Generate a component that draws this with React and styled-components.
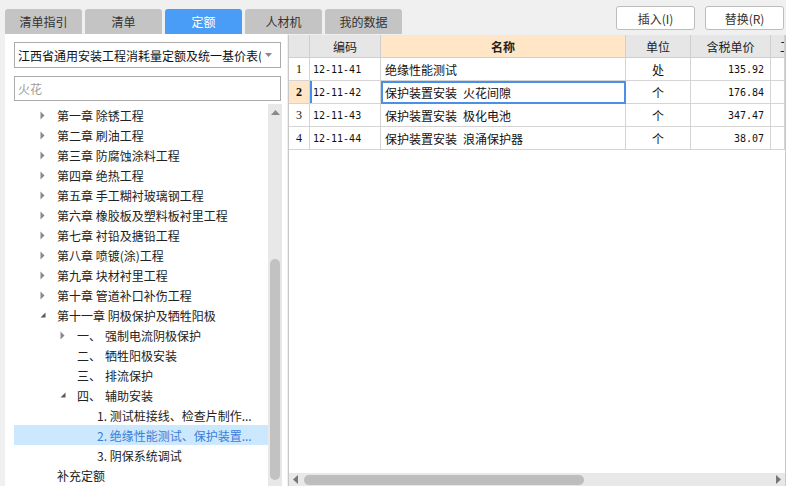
import React from 'react'
import styled, { createGlobalStyle } from 'styled-components'

const GlobalStyle = createGlobalStyle`
    body {
        margin: 0;
        background: #f0f0f0;
        font-family: "Noto Sans CJK SC", "Noto Sans", sans-serif;
        color: #222;
    }
`

const tabs = ['清单指引', '清单', '定额', '人材机', '我的数据']

const tree = [
    { level: 0, arrow: 'right', text: '第一章 除锈工程' },
    { level: 0, arrow: 'right', text: '第二章 刷油工程' },
    { level: 0, arrow: 'right', text: '第三章 防腐蚀涂料工程' },
    { level: 0, arrow: 'right', text: '第四章 绝热工程' },
    { level: 0, arrow: 'right', text: '第五章 手工糊衬玻璃钢工程' },
    { level: 0, arrow: 'right', text: '第六章 橡胶板及塑料板衬里工程' },
    { level: 0, arrow: 'right', text: '第七章 衬铅及搪铅工程' },
    { level: 0, arrow: 'right', text: '第八章 喷镀(涂)工程' },
    { level: 0, arrow: 'right', text: '第九章 块材衬里工程' },
    { level: 0, arrow: 'right', text: '第十章 管道补口补伤工程' },
    { level: 0, arrow: 'down', text: '第十一章 阴极保护及牺牲阳极' },
    { level: 1, arrow: 'right', num: '一、', text: '强制电流阴极保护' },
    { level: 1, num: '二、', text: '牺牲阳极安装' },
    { level: 1, num: '三、', text: '排流保护' },
    { level: 1, arrow: 'down', num: '四、', text: '辅助安装' },
    { level: 2, text: '1. 测试桩接线、检查片制作...' },
    { level: 2, text: '2. 绝缘性能测试、保护装置...', selected: true },
    { level: 2, text: '3. 阴保系统调试' },
    { level: 0, text: '补充定额' },
]

const rows = [
    { no: 1, code: '12-11-41', name: '绝缘性能测试', unit: '处', price: '135.92' },
    { no: 2, code: '12-11-42', name: '保护装置安装\u2002火花间隙', unit: '个', price: '176.84', selected: true },
    { no: 3, code: '12-11-43', name: '保护装置安装\u2002极化电池', unit: '个', price: '347.47' },
    { no: 4, code: '12-11-44', name: '保护装置安装\u2002浪涌保护器', unit: '个', price: '38.07' },
]

const Page = styled.div`
    width: 786px;
    height: 486px;
    display: flex;
    flex-direction: column;
    overflow: hidden;
`

const TopBar = styled.div`
    height: 34px;
    display: flex;
    justify-content: space-between;
    padding: 0 2px 0 5px;
    flex-shrink: 0;
`

const Tabs = styled.div`
    display: flex;
    gap: 3px;
    align-self: flex-end;
`

const Tab = styled.div`
    width: 77px;
    height: 25px;
    border-radius: 3px 3px 0 0;
    background: ${({ active }) => active ? '#4a9df6' : '#c4c4c4'};
    color: ${({ active }) => active ? '#fff' : '#333'};
    font-size: 12px;
    display: flex;
    align-items: center;
    justify-content: center;
`

const Buttons = styled.div`
    display: flex;
    gap: 10px;
    padding-top: 6px;
`

const Button = styled.div`
    width: 77px;
    height: 22px;
    border: 1px solid #bcbcbc;
    border-radius: 3px;
    background: #fff;
    font-size: 12px;
    color: #333;
    display: flex;
    align-items: center;
    justify-content: center;
`

const Main = styled.div`
    flex: 1;
    min-height: 0;
    display: flex;
    padding-left: 5px;
`

const LeftPanel = styled.div`
    width: 282px;
    background: #fff;
    display: flex;
    flex-direction: column;
    padding: 8px 5px 0 9px;
    box-sizing: border-box;
`

const Select = styled.div`
    height: 26px;
    width: 267px;
    box-sizing: border-box;
    border: 1px solid #ababab;
    display: flex;
    align-items: center;
    padding: 0 6px 0 3px;
    font-size: 12px;
    color: #111;
`

const SelectText = styled.span`
    flex: 1;
    overflow: hidden;
    white-space: nowrap;
    margin-right: 4px;
`

const Search = styled.div`
    margin-top: 8px;
    height: 25px;
    width: 267px;
    box-sizing: border-box;
    border: 1px solid #ababab;
    display: flex;
    align-items: center;
    padding-left: 3px;
    font-size: 12px;
    color: #a0a0a0;
`

const TreeArea = styled.div`
    margin-top: 3px;
    flex: 1;
    min-height: 0;
    display: flex;
`

const TreeList = styled.div`
    flex: 1;
    padding-top: 1px;
    overflow: hidden;
`

const TreeRow = styled.div`
    height: 20px;
    display: flex;
    align-items: center;
    padding-left: ${({ level }) => 26 + level * 20}px;
    background: ${({ selected }) => selected ? '#cce8ff' : 'transparent'};
    color: ${({ selected }) => selected ? '#3d7dd6' : '#222'};
    font-size: 12px;
    white-space: nowrap;
`

const ArrowSlot = styled.span`
    width: 17px;
    flex-shrink: 0;
    display: flex;
    align-items: center;
`

const Num = styled.span`
    width: 28px;
    flex-shrink: 0;
`

const VScroll = styled.div`
    width: 14px;
    background: #e8e8e8;
    display: flex;
    flex-direction: column;
    align-items: center;
`

const VThumb = styled.div`
    margin-top: 139px;
    width: 10px;
    flex: 1;
    margin-bottom: 6px;
    border-radius: 5px;
    background: #c2c2c2;
`

const ScrollArrow = styled.div`
    height: ${({ size }) => size || 16}px;
    width: ${({ w }) => w ? `${w}px` : 'auto'};
    display: flex;
    align-items: center;
    justify-content: center;
    flex-shrink: 0;
`

const GridPanel = styled.div`
    flex: 1;
    margin-left: 1px;
    margin-top: 1px;
    background: #fff;
    border-left: 1px solid #c8c8c8;
    border-right: 1px solid #c8c8c8;
    display: flex;
    flex-direction: column;
    min-width: 0;
`

const Table = styled.div`
    display: grid;
    grid-template-columns: 21px 71px 245px 65px 80px 1fr;
    grid-auto-rows: 23px;
    flex: 1;
    align-content: start;
    overflow: hidden;
`

const HeadCell = styled.div`
    background: ${({ accent }) => accent ? '#fee6c6' : '#e6e6e6'};
    border-right: 1px solid #cfcfcf;
    border-bottom: 1px solid #cfcfcf;
    font-size: 12px;
    font-weight: ${({ accent }) => accent ? 700 : 400};
    color: #222;
    display: flex;
    align-items: center;
    justify-content: ${({ clipped }) => clipped ? 'flex-start' : 'center'};
    padding-left: ${({ clipped }) => clipped ? '9px' : '0'};
    overflow: hidden;
    white-space: nowrap;
`

const Cell = styled.div`
    border-right: 1px solid #d4d4d4;
    border-bottom: 1px solid #d4d4d4;
    font-size: 12px;
    color: #111;
    display: flex;
    align-items: center;
    justify-content: ${({ align }) => align || 'flex-start'};
    padding: 0 ${({ align }) => align === 'flex-end' ? '6px' : '0'} 0 ${({ align }) => align ? '0' : '3px'};
    white-space: nowrap;
    overflow: hidden;
    box-sizing: border-box;
`

const NumCell = styled(Cell)`
    font-family: "Liberation Serif", serif;
    font-size: 12px;
    font-weight: ${({ active }) => active ? 700 : 400};
    background: ${({ active }) => active ? '#fee6c6' : '#fff'};
    justify-content: center;
    padding: 0;
`

const CodeCell = styled(Cell)`
    font-family: "DejaVu Sans Mono", monospace;
    font-size: 10px;
    box-shadow: ${({ active }) => active ? 'inset 2px 0 0 #3f8ef0' : 'none'};
`

const PriceCell = styled(Cell)`
    font-family: "DejaVu Sans Mono", monospace;
    font-size: 10px;
`

const NameCell = styled(Cell)`
    ${({ active }) => active && `
        outline: 2px solid #4a8fe8;
        outline-offset: -2px;
    `}
    padding-left: 4px;
`

const HScroll = styled.div`
    height: 13px;
    background: #e8e8e8;
    display: flex;
    align-items: center;
    flex-shrink: 0;
`

const HThumb = styled.div`
    width: 280px;
    height: 10px;
    margin-left: 3px;
    border-radius: 5px;
    background: #bdbdbd;
`

const Spacer = styled.div`
    flex: 1;
`

const Triangle = ({ dir }) => {
    if (dir === 'down') {
        return <svg width="6" height="6" viewBox="0 0 6 6"><polygon points="5.5,0.5 5.5,5.5 0.5,5.5" fill="#5a5a5a" /></svg>
    }
    return <svg width="5" height="9" viewBox="0 0 5 9"><polygon points="0.5,0.5 4.5,4.5 0.5,8.5" fill="#8a8a8a" /></svg>
}

const Caret = ({ dir, color = '#7a7a7a' }) => {
    const pts = {
        up: '0,5 4.5,0 9,5',
        down: '0,0 7,0 3.5,4',
        left: '5,0 5,9 0,4.5',
        right: '0,0 0,9 5,4.5',
    }[dir]
    const vertical = dir === 'up' || dir === 'down'
    return <svg width={vertical ? 9 : 5} height={vertical ? 5 : 9}>
        <polygon points={pts} fill={color} />
    </svg>
}

export default function App() {
    return <>
        <GlobalStyle />
        <Page>
            <TopBar>
                <Tabs>
                    {tabs.map(t => <Tab key={t} active={t === '定额'}>{t}</Tab>)}
                </Tabs>
                <Buttons>
                    <Button>插入(I)</Button>
                    <Button>替换(R)</Button>
                </Buttons>
            </TopBar>
            <Main>
                <LeftPanel>
                    <Select>
                        <SelectText>江西省通用安装工程消耗量定额及统一基价表(</SelectText>
                        <Caret dir="down" color="#888" />
                    </Select>
                    <Search>火花</Search>
                    <TreeArea>
                        <TreeList>
                            {tree.map((node, i) => (
                                <TreeRow key={i} level={node.level} selected={node.selected}>
                                    <ArrowSlot>{node.arrow && <Triangle dir={node.arrow} />}</ArrowSlot>
                                    {node.num && <Num>{node.num}</Num>}
                                    <span>{node.text}</span>
                                </TreeRow>
                            ))}
                        </TreeList>
                        <VScroll>
                            <ScrollArrow><Caret dir="up" color="#8a8a8a" /></ScrollArrow>
                            <VThumb />
                        </VScroll>
                    </TreeArea>
                </LeftPanel>
                <GridPanel>
                    <Table>
                        <HeadCell />
                        <HeadCell>编码</HeadCell>
                        <HeadCell accent>名称</HeadCell>
                        <HeadCell>单位</HeadCell>
                        <HeadCell>含税单价</HeadCell>
                        <HeadCell clipped>工</HeadCell>
                        {rows.map(r => (
                            <React.Fragment key={r.no}>
                                <NumCell active={r.selected}>{r.no}</NumCell>
                                <CodeCell active={r.selected}>{r.code}</CodeCell>
                                <NameCell active={r.selected}>{r.name}</NameCell>
                                <Cell align="center">{r.unit}</Cell>
                                <PriceCell align="flex-end">{r.price}</PriceCell>
                                <Cell />
                            </React.Fragment>
                        ))}
                    </Table>
                    <HScroll>
                        <ScrollArrow size={13} w={12}><Caret dir="left" color="#777" /></ScrollArrow>
                        <HThumb />
                        <Spacer />
                        <ScrollArrow size={13} w={14}><Caret dir="right" color="#777" /></ScrollArrow>
                    </HScroll>
                </GridPanel>
            </Main>
        </Page>
    </>
}
